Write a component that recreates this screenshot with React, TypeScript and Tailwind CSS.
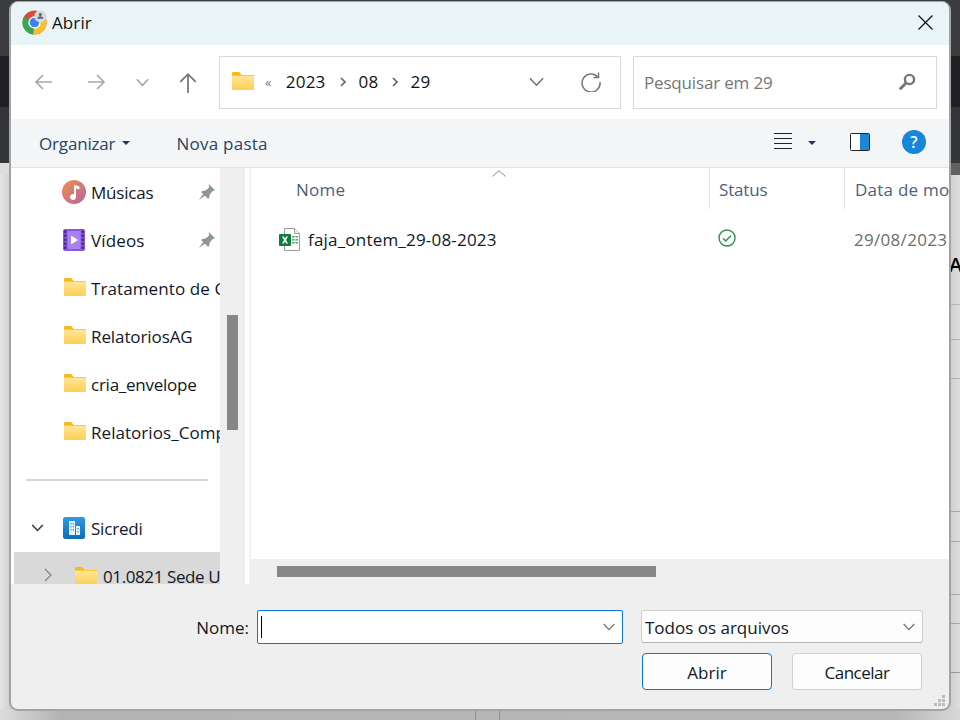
import React from "react";

const Folder = ({ className = "" }: { className?: string }) => (
  <svg viewBox="0 0 22 18" className={className}>
    <defs>
      <linearGradient id="fg" x1="0" y1="0" x2="0" y2="1">
        <stop offset="0" stopColor="#ffe79a" />
        <stop offset="1" stopColor="#fdcf55" />
      </linearGradient>
    </defs>
    <path d="M0 1.5C0 .7.6 0 1.3 0h6l2.2 3H0z" fill="#fdb813" />
    <rect x="0" y="3" width="22" height="15" rx="1" fill="url(#fg)" />
    <rect x="0" y="3" width="22" height="1" fill="#ffc83a" />
  </svg>
);

const Chrome = () => (
  <svg viewBox="0 0 26 26" className="w-[25px] h-[25px] shrink-0">
    <circle cx="13" cy="13" r="12.5" fill="#dd4b3c" />
    <path d="M13 13 L23.8 6.8 A12.5 12.5 0 0 1 11.5 25.4 Z" fill="#fbc02d" />
    <path d="M13 13 L11.5 25.4 A12.5 12.5 0 0 1 2.2 6.8 Z" fill="#34a853" />
    <circle cx="13" cy="13" r="6.4" fill="#fff" />
    <circle cx="13" cy="13" r="5" fill="#3f84ee" />
    <circle cx="19" cy="6.5" r="6.2" fill="#d8dadd" />
    <circle cx="19" cy="4.8" r="1.6" fill="#5f6368" />
    <path d="M15.8 9.2c.4-1.9 1.7-2.6 3.2-2.6s2.8.7 3.2 2.6z" fill="#5f6368" />
  </svg>
);

const Pin = () => (
  <svg viewBox="1 1 14 14" className="w-4 h-4 shrink-0">
    <path d="M9.5 1 15 6.5l-2 .7-2.6 3 -.4 3-1.2 .8L3 8.3l.8-1.2 3-.4 3-2.6z" fill="#8b979f" />
    <path d="M5.2 9.2 1 15l5.8-4.2z" fill="#8b979f" />
  </svg>
);

const Music = () => (
  <svg viewBox="0 0 24 24" className="w-[24px] h-[24px] shrink-0">
    <defs>
      <linearGradient id="mg" x1="0" y1="0" x2="1" y2="1">
        <stop offset="0" stopColor="#f1904a" />
        <stop offset="1" stopColor="#b564a8" />
      </linearGradient>
    </defs>
    <circle cx="12" cy="12" r="12" fill="url(#mg)" />
    <path d="M12 5v9.2a3 3 0 1 0 2 2.8V8.6l3.4 1V6.2z" fill="#fff" />
  </svg>
);

const Video = () => (
  <svg viewBox="0 0 22 22" className="w-[22px] h-[22px] shrink-0">
    <rect width="22" height="22" rx="2" fill="#8a55e0" />
    <rect x="4.5" y="2" width="13" height="18" fill="#a681ef" />
    {[2, 6, 10, 14, 18].map((y) => (
      <g key={y}>
        <rect x="1" y={y - 0.5} width="2.5" height="2.4" fill="#4a2a8c" />
        <rect x="18.5" y={y - 0.5} width="2.5" height="2.4" fill="#4a2a8c" />
      </g>
    ))}
    <path d="M8 6.5 15 11l-7 4.5z" fill="#fff" />
  </svg>
);

const Building = () => (
  <svg viewBox="0 0 22 22" className="w-[22px] h-[22px] shrink-0">
    <defs>
      <linearGradient id="bg" x1="0" y1="0" x2="0" y2="1">
        <stop offset="0" stopColor="#2f9be4" />
        <stop offset="1" stopColor="#0f6cb8" />
      </linearGradient>
    </defs>
    <rect width="22" height="22" rx="2.5" fill="url(#bg)" />
    <path d="M6 4h6v14H6zM13 9h4v9h-4z" fill="#e6f3fc" />
    <path d="M7.5 6h1v1.5h-1zM9.8 6h1v1.5h-1zM7.5 9h1v1.5h-1zM9.8 9h1v1.5h-1zM7.5 12h1v1.5h-1zM9.8 12h1v1.5h-1zM14.5 11h1v1.5h-1zM14.5 14h1v1.5h-1z" fill="#2b86cf" />
  </svg>
);

const Excel = () => (
  <svg viewBox="0 0 21 23" className="w-[21px] h-[23px] shrink-0">
    <path d="M5.5 .5h10l5 5v17h-15z" fill="#fff" stroke="#9a9a9a" />
    <path d="M15.5 .5v5h5" fill="#f2f2f2" stroke="#9a9a9a" />
    <g fill="#5ea983">
      <rect x="13" y="8" width="2.6" height="1.6" />
      <rect x="16.4" y="8" width="2.6" height="1.6" />
      <rect x="13" y="11" width="2.6" height="1.6" />
      <rect x="16.4" y="11" width="2.6" height="1.6" />
      <rect x="13" y="14" width="2.6" height="1.6" />
      <rect x="16.4" y="14" width="2.6" height="1.6" />
    </g>
    <rect x="0" y="6" width="12" height="12" rx="1" fill="#107c41" />
    <path d="M3 8.5h1.9L6 10.8l1.2-2.3H9L7 12l2 3.5H7.1L6 13.2l-1.2 2.3H3L5 12z" fill="#fff" />
  </svg>
);

const Arrow = ({ d, color, className = "" }: { d: string; color: string; className?: string }) => (
  <svg viewBox="0 0 20 20" className={className} fill="none" stroke={color} strokeWidth="1.6">
    <path d={d} />
  </svg>
);

const Chevron = ({ className = "", color = "#6f6f6f", width = "1.2" }: { className?: string; color?: string; width?: string }) => (
  <svg viewBox="0 0 12 8" className={className} fill="none" stroke={color} strokeWidth={width}>
    <path d="M.7 1 6 6.6 11.3 1" />
  </svg>
);

const Caret = ({ className = "" }: { className?: string }) => (
  <svg viewBox="0 0 8 4" className={className}>
    <path d="M0 0h8L4 4z" fill="#1f3a5f" />
  </svg>
);

const Crumb = () => (
  <svg viewBox="0 0 6 10" className="w-[6px] h-[10px] shrink-0" fill="none" stroke="#666" strokeWidth="1.7">
    <path d="M1 1l4 4-4 4" />
  </svg>
);

const SideRow = ({ icon, label, pin, text = "tracking-[-0.1px]" }: { icon: React.ReactNode; label: string; pin?: boolean; text?: string }) => (
  <div className="h-12 flex items-center pl-[51px] shrink-0 relative">
    <span className="w-[24px] flex justify-center shrink-0">{icon}</span>
    <span className={"ml-[5px] mt-[2px] whitespace-nowrap text-[#111827] " + text}>{label}</span>
    {pin && (
      <span className="absolute left-[188px] top-4">
        <Pin />
      </span>
    )}
  </div>
);

const SideFolder = () => <Folder className="w-[22px] h-[18px] -mt-[2px] ml-px" />;

export default function App() {
  return (
    <div className="relative w-[960px] h-[720px] overflow-hidden font-['Open_Sans',sans-serif] text-[17px] leading-6">
      {/* page behind the dialog */}
      <div className="absolute inset-0 flex flex-col bg-[linear-gradient(90deg,#e6e6e6_0,#d2d2d2_9px,#c8c8c8_11px,#d0d0d0_951px,#dedede_100%)]">
        <div className="h-[56px] bg-[#3a3c3e]" />
        <div className="h-[51px] bg-[#1f2023]" />
        <div className="h-[56px] bg-[#35363a]" />
        <div className="h-[12px] bg-[linear-gradient(90deg,#dcdcdc_0,#dcdcdc_10px,#606060_11px)]" />
        <div className="h-[130px] ml-[951px] border-b border-[#b5b5b5]">
          <div className="-ml-[2px] pt-[78px] text-black text-[20px] font-semibold whitespace-nowrap">A</div>
        </div>
        <div className="h-[35px] ml-[951px] border-b border-[#b0b0b0]" />
        <div className="h-[39px] ml-[951px] border-b border-[#b0b0b0]" />
        <div className="h-[133px] ml-[951px] border-b border-[#a8a8a8]" />
        <div className="h-[30px] ml-[951px] border-b border-[#a8a8a8]" />
        <div className="h-[53px] ml-[951px] border-b border-[#a8a8a8]" />
        <div className="h-[29px] ml-[951px] border-b border-[#a8a8a8]" />
        <div className="h-[49px] ml-[951px] border-b border-[#999]" />
        <div className="h-[36px]" />
        <div className="h-[11px] bg-[linear-gradient(90deg,#dcdcdc_0,#b4b4b4_60px,#b8b8b8_900px,#d8d8d8_100%)] pl-[475px] flex">
          <div className="w-[25px] border-x border-[#8f8f8f]" />
        </div>
      </div>

      {/* dialog */}
      <div className="absolute left-[9px] top-[1px] w-[942px] h-[710px] border-2 border-[#a3a3a3] rounded-[9px] overflow-hidden flex flex-col bg-[#efefef] [border-top-width:1px]">
        {/* title */}
        <div className="h-[43px] shrink-0 bg-[#e9f4f7] flex items-center pl-[11px] pb-[2px] relative">
          <Chrome />
          <span className="ml-[5px] text-[#111] tracking-[0.1px]">Abrir</span>
          <svg viewBox="0 0 16 16" className="absolute right-[16px] top-[13px] w-[15px] h-[15px]" fill="none" stroke="#111" strokeWidth="1.3">
            <path d="M.5.5l15 15M15.5.5l-15 15" />
          </svg>
        </div>

        {/* navigation */}
        <div className="h-[74px] shrink-0 bg-white flex items-center">
          <Arrow className="w-5 h-5 ml-[23px]" color="#a6a6a6" d="M18 10H2M9 3l-7 7 7 7" />
          <Arrow className="w-5 h-5 ml-[32px]" color="#a6a6a6" d="M2 10h16M11 3l7 7-7 7" />
          <Chevron className="w-[13px] h-[9px] ml-[30px]" color="#a6a6a6" width="1.5" />
          <Arrow className="w-[22px] h-[22px] ml-[28px] mt-[2px]" color="#767676" d="M10 19V2M3 9l7-7 7 7" />
          <div className="w-[402px] h-[53px] ml-[20px] border border-[#d9d9d9] flex items-center pl-[12px] text-[#111] tracking-[0.25px]">
            <Folder className="w-[22px] h-[18px] shrink-0 -mt-[2px]" />
            <span className="ml-[11px] text-[#777] text-[13px] leading-none">«</span>
            <span className="ml-[14px]">2023</span>
            <span className="ml-[14px]"><Crumb /></span>
            <span className="ml-[13px]">08</span>
            <span className="ml-[13px]"><Crumb /></span>
            <span className="ml-[13px]">29</span>
            <Chevron className="w-[17px] h-[10px] ml-[97px]" color="#707070" />
            <svg viewBox="0 0 20 20" className="w-5 h-5 ml-[36px]" fill="none" stroke="#767676" strokeWidth="1.5">
              <path d="M16.9 5.2A9 9 0 1 0 19 10" />
              <path d="M17.5 .5v5h-5" />
            </svg>
          </div>
          <div className="w-[304px] h-[53px] ml-[12px] border border-[#d9d9d9] flex items-center pl-[10px] text-[#767676] tracking-[-0.17px]">
            <span className="flex-1 mt-[2px]">Pesquisar em 29</span>
            <svg viewBox="0 0 18 18" className="w-[18px] h-[18px] mr-[20px]" fill="none" stroke="#767676">
              <circle cx="11.5" cy="6.5" r="4.6" strokeWidth="2.4" />
              <path d="M7.8 10.2 1.8 16.2" strokeWidth="3" />
            </svg>
          </div>
        </div>

        {/* toolbar */}
        <div className="h-[49px] pb-px shrink-0 bg-[#f4f5f7] border-b border-[#e3e3e3] flex items-center text-[#2b4468]">
          <span className="ml-[28px] mt-[2px] tracking-[-0.17px]">Organizar</span>
          <Caret className="w-2 h-1 ml-[7px]" />
          <span className="ml-[46px] mt-[2px] tracking-[0.25px]">Nova pasta</span>
          <svg viewBox="0 0 18 17" className="w-[18px] h-[17px] ml-auto -mt-[2px]" stroke="#222" strokeWidth="1">
            <path d="M0 .5h18M0 5.5h18M0 10.5h18M0 15.5h18" />
          </svg>
          <Caret className="w-2 h-1 ml-[16px]" />
          <svg viewBox="0 0 20 18" className="w-5 h-[18px] ml-[34px] -mt-[2px]">
            <rect x=".5" y=".5" width="19" height="17" rx="1" fill="#fff" stroke="#222" />
            <rect x="10" y="1" width="9" height="16" fill="#1c86d8" />
          </svg>
          <span className="ml-[32px] mr-[23px] -mt-[2px] w-6 h-6 rounded-full bg-[#1586d8] text-white text-[16px] font-semibold flex items-center justify-center">?</span>
        </div>

        {/* body */}
        <div className="h-[416px] shrink-0 flex bg-white">
          {/* sidebar */}
          <div className="w-[209px] shrink-0 overflow-hidden flex flex-col">
            <SideRow icon={<Music />} label="Músicas" text="tracking-[-0.2px]" pin />
            <SideRow icon={<Video />} label="Vídeos" text="tracking-[0.15px]" pin />
            <SideRow icon={<SideFolder />} label="Tratamento de Chamados" text="tracking-[0.1px]" />
            <SideRow icon={<SideFolder />} label="RelatoriosAG" />
            <SideRow icon={<SideFolder />} label="cria_envelope" text="tracking-[-0.25px]" />
            <SideRow icon={<SideFolder />} label="Relatorios_Comparativos" text="tracking-[0.05px]" />
            <div className="h-12 shrink-0 flex items-center pl-[15px] pr-[12px]">
              <div className="h-[2px] w-full bg-[#d6d6d6]" />
            </div>
            <div className="h-12 shrink-0 flex items-center pl-[20px]">
              <Chevron className="w-[13px] h-[8px]" color="#333" width="1.4" />
              <span className="ml-[19px]"><Building /></span>
              <span className="ml-[6px] mt-[2px] text-[#111827] tracking-[-0.2px]">Sicredi</span>
            </div>
            <div className="h-12 shrink-0 ml-[3px] bg-[#d9d9d9] flex items-center pl-[30px] whitespace-nowrap overflow-hidden">
              <svg viewBox="0 0 8 14" className="w-2 h-[14px] shrink-0 -mt-[2px]" fill="none" stroke="#8a8a8a" strokeWidth="1.4">
                <path d="M1 1l6 6-6 6" />
              </svg>
              <Folder className="w-[22px] h-[18px] ml-[23px] shrink-0" />
              <span className="ml-[6px] mt-[2px] text-[#111827] tracking-[-0.4px]">01.0821 Sede Unidade</span>
            </div>
          </div>

          {/* sidebar scrollbar */}
          <div className="w-[25px] shrink-0 bg-[#efefef] pl-[7px] pt-[147px]">
            <div className="w-[11px] h-[115px] bg-[#878787]" />
          </div>
          <div className="w-[6px] shrink-0 bg-white border-r-2 border-[#f2f2f2]" />

          {/* file list */}
          <div className="flex-1 min-w-0 overflow-hidden flex flex-col relative">
            <svg viewBox="0 0 14 7" className="absolute left-[241px] top-[2px] w-[14px] h-[7px]" fill="none" stroke="#8a8a8a">
              <path d="M.5 6.5 7 .7l6.5 5.8" />
            </svg>
            <div className="h-[41px] flex shrink-0 text-[#4b5f80]">
              <div className="w-[458px] shrink-0 pl-[45px] pt-[10px] tracking-[0.25px]">Nome</div>
              <div className="w-[135px] shrink-0 border-l border-[#e3e3e3] pl-[9px] pt-[10px] tracking-[-0.17px]">Status</div>
              <div className="flex-1 min-w-0 border-l border-[#e3e3e3] pl-[10px] pt-[10px] whitespace-nowrap tracking-[0.25px]">Data de modificação</div>
            </div>
            <div className="h-[60px] flex items-center shrink-0">
              <div className="w-[458px] shrink-0 flex items-center pl-[28px] text-[#111827]">
                <Excel />
                <span className="ml-[8px] mt-[2px] tracking-[0.2px]">faja_ontem_29-08-2023</span>
              </div>
              <div className="w-[135px] shrink-0 pl-[9px]">
                <svg viewBox="0 0 18 18" className="w-[18px] h-[18px] -mt-[2px]" fill="none" stroke="#2b9348" strokeWidth="1.4">
                  <circle cx="9" cy="9" r="8" />
                  <path d="M5 9.3l2.8 2.7L13 6.6" />
                </svg>
              </div>
              <div className="flex-1 min-w-0 pl-[10px] mt-[2px] whitespace-nowrap text-[#6d6d6d] tracking-[0.3px]">29/08/2023 10:30</div>
            </div>
            <div className="mt-auto h-[25px] bg-[#efefef] pl-[26px] pt-[7px] shrink-0">
              <div className="w-[379px] h-[11px] bg-[#878787]" />
            </div>
          </div>
        </div>

        {/* footer */}
        <div className="flex-1 relative flex flex-col items-end pr-[26px] pt-[26px]">
          <div className="flex items-start h-[34px]">
            <span className="text-[#111827] mr-[8px] mt-[6px]">Nome:</span>
            <div className="w-[366px] h-[34px] bg-white border border-[#0a78d0] rounded-[2px] flex items-center pl-[3px]">
              <div className="w-px h-[22px] bg-black" />
              <Chevron className="w-[12px] h-[8px] ml-auto mr-[7px]" color="#707070" />
            </div>
            <div className="w-[282px] h-[33px] ml-[18px] bg-[#fdfdfd] border border-[#d0d0d0] border-b-[#b5b5b5] rounded-[3px] flex items-center pl-[3px] text-[#111827]">
              <span className="mt-[2px]">Todos os arquivos</span>
              <Chevron className="w-[12px] h-[8px] ml-auto mr-[7px]" color="#707070" />
            </div>
          </div>
          <div className="flex mt-[9px] mr-px gap-[20px] text-[#111827]">
            <div className="w-[130px] h-[37px] pt-[2px] bg-[#fdfdfd] border border-[#0a78d0] rounded-[4px] flex items-center justify-center">Abrir</div>
            <div className="w-[130px] h-[37px] pt-[2px] bg-[#fdfdfd] border border-[#d0d0d0] rounded-[4px] flex items-center justify-center tracking-[-0.5px]">Cancelar</div>
          </div>
          <svg viewBox="0 0 14 12" className="absolute right-[2px] bottom-[2px] w-[14px] h-[12px]" fill="#bcbcbc">
            <rect x="9" y="0" width="3" height="3" />
            <rect x="5" y="4" width="3" height="3" />
            <rect x="9" y="4" width="3" height="3" />
            <rect x="1" y="8" width="3" height="3" />
            <rect x="5" y="8" width="3" height="3" />
            <rect x="9" y="8" width="3" height="3" />
          </svg>
        </div>
      </div>
    </div>
  );
}
